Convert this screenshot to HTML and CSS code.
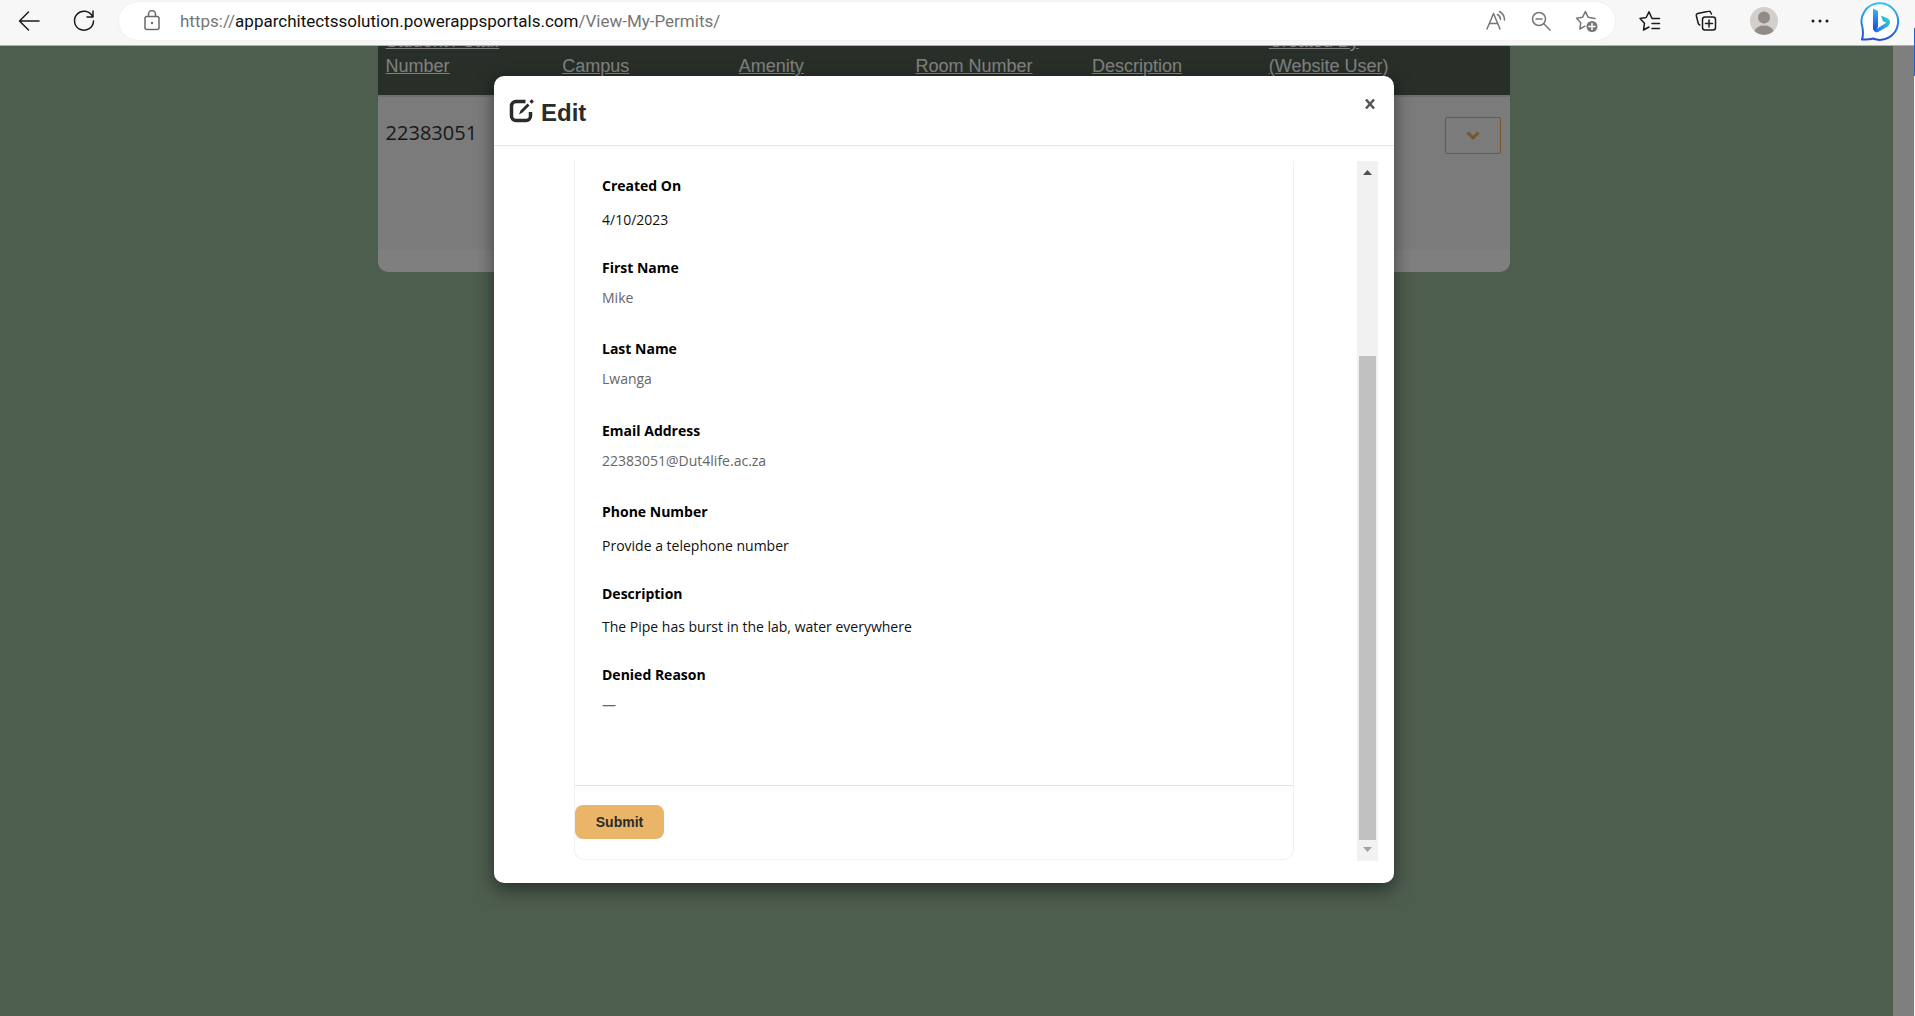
FILE: index.html
```html
<!DOCTYPE html>
<html lang="en">
<head>
<meta charset="utf-8">
<title>View My Permits</title>
<link rel="stylesheet" href="styles.css">
</head>
<body>
<header class="browser-bar">
  <button class="tool" aria-label="Back"><svg width="22" height="22" viewBox="0 0 22 22"><path d="M21 11H1.500M10.500 2L1.500 11l9 9"/></svg></button>
  <button class="tool tool-reload" aria-label="Refresh"><svg width="24" height="24" viewBox="0 0 24 24"><path d="M20.500 7.500A9.500 9.500 0 1 0 21.500 12M21 2v6h-6"/></svg></button>
  <div class="address">
    <svg class="lock" width="18" height="22" viewBox="0 0 18 22"><rect x="2" y="6.500" width="14" height="13" rx="2"/><path d="M5.500 6.500V4a3.500 3.500 0 0 1 7 0v2.500"/><circle class="solid" cx="9" cy="13" r="1.200"/></svg>
    <a class="url" href="#">https://<span class="host">apparchitectssolution.powerappsportals.com</span>/View-My-Permits/</a>
    <button class="tool muted" aria-label="Read aloud"><svg width="22" height="22" viewBox="0 0 22 22"><path d="M2 19L8.500 3.500 15 19M4.300 13.500h8.400M12.500 4.500a6 6 0 0 1 3 5M14.500 1.500a10 10 0 0 1 5 8.500"/></svg></button>
    <button class="tool muted" aria-label="Zoom out"><svg width="22" height="22" viewBox="0 0 22 22"><circle cx="9" cy="9" r="6.500"/><path d="M13.800 13.800L20 20M6 9h6"/></svg></button>
    <button class="tool muted" aria-label="Add to favorites"><svg width="24" height="24" viewBox="0 0 24 24"><path d="M10 17.200L4.800 20l1-6.300L1.500 9.200l6-.9L10.400 2.500l2.800 5.800 6.800 1.200"/><circle class="solid" cx="17" cy="17.500" r="5.500"/><path class="plus" d="M17 14.500v6M14 17.500h6"/></svg></button>
  </div>
  <div class="browser-tools">
    <button class="tool" aria-label="Favorites"><svg width="24" height="24" viewBox="0 0 24 24"><path d="M21.500 9.500H14l-3-6.700L8.200 8.500 2 9.500l4.500 4.700L5.500 21l5.500-3M14 14.500h7.500M14 19.500h7.500"/></svg></button>
    <button class="tool" aria-label="Collections"><svg width="24" height="24" viewBox="0 0 24 24"><rect x="8.500" y="8" width="13" height="13" rx="2.500"/><path d="M15 11v7M11.500 14.500h7M17.500 5l-.7-1.500c-.4-1-1.300-1.500-2.300-1.200L3.700 4.500c-1 .3-1.600 1.200-1.400 2.200l2 7.800c.2.800.7 1.200 1.500 1.400"/></svg></button>
    <button class="tool" aria-label="Profile"><svg class="avatar" width="28" height="28" viewBox="0 0 28 28"><circle cx="14" cy="14" r="14" fill="#d2d0cd"/><circle cx="14" cy="10.500" r="6" fill="#918a86"/><path d="M4.500 24a10 8 0 0 1 19 0A14 14 0 0 1 4.500 24z" fill="#918a86"/></svg></button>
    <button class="tool" aria-label="Settings and more"><svg width="20" height="20" viewBox="0 0 20 20"><g class="solid"><circle cx="3" cy="10" r="1.500"/><circle cx="10" cy="10" r="1.500"/><circle cx="17" cy="10" r="1.500"/></g></svg></button>
    <button class="tool tool-bing" aria-label="Bing"><svg class="bing" width="40" height="40" viewBox="0 0 40 40">
      <defs>
        <linearGradient id="ring" x1="0" y1="0" x2="0" y2="1"><stop offset="0" stop-color="#2cc4f4"/><stop offset="1" stop-color="#2450d8"/></linearGradient>
        <linearGradient id="stem" x1="0" y1="0" x2="0" y2="1"><stop offset="0" stop-color="#38b6f8"/><stop offset="1" stop-color="#1b48e0"/></linearGradient>
        <linearGradient id="bowl" x1="1" y1="0" x2="0" y2="1"><stop offset="0" stop-color="#33dccb"/><stop offset="1" stop-color="#1e6cf0"/></linearGradient>
      </defs>
      <path d="M2 38.500c1.200-3 1.200-7 .5-12A18.300 18.300 0 1 1 13 37.500C9.500 38.500 5 38.500 2 38.500z" fill="#fff" stroke="url(#ring)" stroke-width="2"/>
      <path d="M21 14.500l1.800 5.500 3.500 1.700L14 29.500c.5 1.800 2.500 2.300 4.500 1.300l9.500-5.500c3-3 2.500-6.500-.5-8z" fill="url(#bowl)"/>
      <path d="M13 7.500l5 2.500v15.500L15.500 30c-1.500 0-2.500-1-2.500-2.500z" fill="url(#stem)"/>
    </svg></button>
  </div>
</header>

<main class="page">
  <div class="content">
    <table class="permits">
      <thead>
        <tr>
          <th><a href="#">Student / Staff Number</a></th>
          <th><a href="#">Campus</a></th>
          <th><a href="#">Amenity</a></th>
          <th><a href="#">Room Number</a></th>
          <th><a href="#">Description</a></th>
          <th><a href="#">Created By (Website User)</a></th>
          <th class="actions"></th>
        </tr>
      </thead>
      <tbody>
        <tr>
          <td>22383051</td><td></td><td></td><td></td><td></td><td></td>
          <td class="actions"><button class="row-menu" aria-label="Row actions"><svg width="14" height="12" viewBox="0 0 14 12"><path d="M1.500 2.500L7 8l5.500-5.500"/></svg></button></td>
        </tr>
      </tbody>
    </table>
  </div>
  <div class="page-scroll"></div>

  <div class="backdrop">
    <section class="modal" role="dialog" aria-labelledby="modal-title">
      <header class="modal-head">
        <svg class="edit-icon" width="26" height="24" viewBox="0 0 26 24"><path d="M16.500 2.500H7a4.500 4.500 0 0 0-4.500 4.500v10A4.500 4.500 0 0 0 7 21.500h10a4.500 4.500 0 0 0 4.500-4.500V13" fill="none" stroke="#2b2b2b" stroke-width="3.500"/><path d="M10 15.500l1.500-4L18.500 4.500l2 2L13.500 13.500zM20.500 2.500L22.700.3l2.200 2.200-2.200 2.200z" fill="#2b2b2b"/></svg>
        <h1 id="modal-title">Edit</h1>
        <button class="close" aria-label="Close"><svg width="12" height="10" viewBox="0 1 12 10"><path d="M2 1.500l8 9M10 1.500l-8 9"/></svg></button>
      </header>
      <div class="modal-body">
        <form class="panel">
          <div class="fields">
            <div class="field"><label for="created">Created On</label><input id="created" type="text" value="4/10/2023"></div>
            <div class="field"><label for="first">First Name</label><output id="first">Mike</output></div>
            <div class="field"><label for="last">Last Name</label><output id="last">Lwanga</output></div>
            <div class="field"><label for="email">Email Address</label><output id="email">22383051@Dut4life.ac.za</output></div>
            <div class="field"><label for="phone">Phone Number</label><input id="phone" type="tel" placeholder="Provide a telephone number"></div>
            <div class="field"><label for="description">Description</label><input id="description" type="text" value="The Pipe has burst in the lab, water everywhere"></div>
            <div class="field"><label for="denied">Denied Reason</label><output id="denied">—</output></div>
          </div>
          <div class="form-actions"><button class="submit" type="button">Submit</button></div>
        </form>
        <div class="scrollbar">
          <svg width="21" height="21" viewBox="0 0 21 21"><path d="M6 14h9l-4.500-5z" fill="#505050"/></svg>
          <div class="track"><div class="thumb"></div></div>
          <svg width="21" height="21" viewBox="0 0 21 21"><path d="M6 7h9l-4.500 5z" fill="#a3a3a3"/></svg>
        </div>
      </div>
    </section>
  </div>
</main>
<div class="edge-marker"></div>
</body>
</html>
```
FILE: styles.css
```css
* { box-sizing: border-box; }

body {
  margin: 0;
  height: 100vh;
  display: flex;
  flex-direction: column;
  overflow: hidden;
  background: #f0f0f0;
  font-family: "Segoe UI", "Open Sans", "Noto Sans", sans-serif;
}

button { border: 0; padding: 0; background: none; font: inherit; cursor: pointer; }

/* Browser toolbar */
.browser-bar {
  flex: none;
  display: flex;
  align-items: center;
  height: 46px;
  padding: 0 15px 4px 18px;
  background: #f7f7f7;
  border-bottom: 1px solid #b0b0b0;
}
.tool { display: flex; color: #1b1b1b; }
.tool svg, .lock {
  fill: none;
  stroke: currentColor;
  stroke-width: 1.5;
  stroke-linecap: round;
  stroke-linejoin: round;
}
.tool .solid, .lock .solid { fill: currentColor; stroke: none; }
.tool .plus { stroke: #fff; }
.tool .avatar, .tool .bing { stroke: none; }
.tool-reload { margin-left: 32px; }
.muted { color: #767676; }
.address {
  flex: 1;
  display: flex;
  align-items: center;
  gap: 23px;
  height: 38px;
  margin-left: 23px;
  padding: 0 16px 0 24px;
  border-radius: 19px;
  background: #fff;
  box-shadow: 0 0 2px #e4e4e4;
}
.lock { flex: none; color: #6a6a6a; margin-right: -4px; }
.url {
  flex: 1;
  font-family: "Segoe UI", Roboto, sans-serif;
  font-size: 17px;
  line-height: 24px;
  color: #767676;
  text-decoration: none;
  white-space: nowrap;
}
.host { color: #111; }
.browser-tools { display: flex; align-items: center; gap: 32px; margin-left: 23px; }
.tool-bing { margin-left: -2px; }

/* Portal page */
.page {
  position: relative;
  flex: 1;
  min-height: 0;
  display: flex;
  margin-right: 1px;
  overflow: hidden;
  background: #9abb9c;
}
.content { flex: 1; padding-right: 5px; }
.page-scroll { width: 21px; background: #fff; }

.permits {
  width: 60%;
  margin: -26px auto 0;
  table-layout: fixed;
  border-spacing: 0;
  border-bottom: 22px solid #fff;
  border-radius: 0 0 10px 10px;
  background: #f6f6f6;
}
.permits th {
  height: 75px;
  padding: 0 8px 16px;
  background: #4f5f50;
  text-align: left;
  vertical-align: bottom;
  font: 400 18px/25px "Liberation Sans", Arial, sans-serif;
}
.permits th a { color: #fff; }
.permits td {
  height: 155px;
  padding: 22px 8px;
  border-top: 2px solid #dedede;
  vertical-align: top;
  font-size: 20px;
  line-height: 28px;
  color: #333;
}
.permits .actions { width: 73px; }
.permits td.actions { padding-top: 20px; }
.row-menu {
  display: flex;
  align-items: center;
  justify-content: center;
  width: 56px;
  height: 37px;
  border: 1px solid #f0ac55;
  border-radius: 2px;
}
.row-menu svg { fill: none; stroke: #f0ac55; stroke-width: 3; }

/* Dialog */
.backdrop {
  position: absolute;
  inset: 0;
  padding: 30px 26px 0 0;
  background: rgba(0, 0, 0, 0.5);
}
.modal {
  width: 900px;
  max-width: 100%;
  margin: 0 auto;
  border-radius: 10px;
  background: #fff;
  box-shadow: 0 6px 18px rgba(0, 0, 0, 0.5);
}
.modal-head {
  display: flex;
  gap: 6px;
  height: 70px;
  padding: 23px 18px 0 15px;
  border-bottom: 1px solid #e5e5e5;
}
.modal-head h1 {
  flex: 1;
  margin: 0;
  font: 700 24px/28px "Liberation Sans", Arial, sans-serif;
  color: #2b2b2b;
}
.close { align-self: flex-start; display: flex; }
.close svg { fill: none; stroke: #555; stroke-width: 2.5; }

.modal-body {
  display: flex;
  justify-content: space-between;
  height: 737px;
  padding: 15px 16px 22px 80px;
}
.panel {
  width: 720px;
  height: 699px;
  display: flex;
  flex-direction: column;
  border: 1px solid #f0f0f0;
  border-top: 0;
  border-radius: 0 0 10px 10px;
}
.fields {
  flex: 1;
  display: grid;
  grid-template-rows: repeat(7, 1fr);
  padding: 14px 27px 39px;
}
.field { display: flex; flex-direction: column; align-items: flex-start; }
.field label { font-size: 14px; line-height: 22px; font-weight: 700; color: #000; }
.field input {
  width: 100%;
  height: 22px;
  margin-top: 11px;
  padding: 0;
  border: 0;
  outline: 0;
  background: transparent;
  font: inherit;
  font-size: 14px;
  color: #111;
}
.field input::placeholder { color: #111; opacity: 1; }
.field output { margin-top: 8px; font-size: 14px; line-height: 22px; color: #666; }

.form-actions { height: 74px; padding-top: 19px; border-top: 1px solid #e0e0e0; }
.submit {
  display: block;
  width: 89px;
  height: 34px;
  border-radius: 8px;
  background: #eab568;
  color: #2b2b2b;
  font: 700 14px/20px "Liberation Sans", Arial, sans-serif;
}

.scrollbar { width: 21px; display: flex; flex-direction: column; background: #f1f1f1; }
.track { flex: 1; display: flex; flex-direction: column; justify-content: flex-end; padding: 0 2px; }
.thumb { height: 73.5%; background: #c1c1c1; }

/* Sliver of the neighbouring window at the right edge */
.edge-marker {
  position: absolute;
  top: 28px;
  right: 0;
  width: 1px;
  height: 48px;
  background: #2a62c4;
}
```
